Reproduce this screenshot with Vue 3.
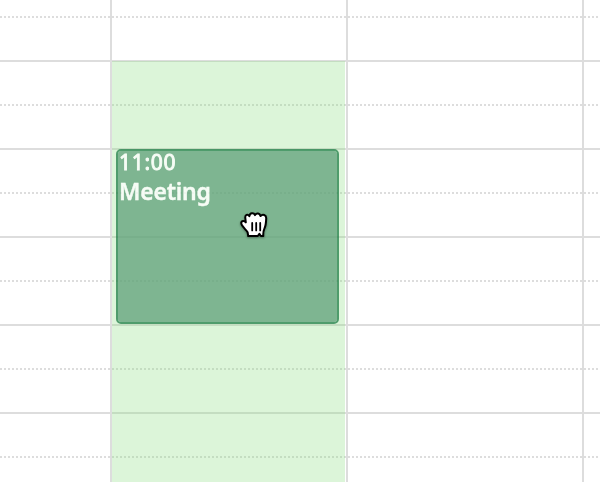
<script setup>
const rows = Array.from({ length: 11 }, (_, i) => ({ id: i, half: i % 2 === 0 }))
const event = { time: '11:00', title: 'Meeting' }
</script>

<template>
  <main class="calendar">
    <div class="slots">
      <div v-for="row in rows" :key="row.id" class="slot" :class="{ half: row.half }"></div>
    </div>
    <div class="columns">
      <div class="axis"></div>
      <div class="day">
        <div class="highlight"></div>
      </div>
      <div class="day"></div>
      <div class="day"></div>
    </div>
    <article class="event">
      <div class="time">{{ event.time }}</div>
      <div class="title">{{ event.title }}</div>
    </article>
    <svg class="cursor" viewBox="0 0 32 32" width="32" height="32" aria-hidden="true">
      <path class="hand" d="M9.6 24.2 C8.4 22 6 20.6 4.2 17.6 C2.4 14.8 3.4 12.6 5.6 13 C6.5 13.1 7.2 13.8 7.8 14.4 L7.3 10 C6.9 6.7 9.6 5.6 11.4 8.1 C12 4.7 15.7 4.4 17 7.1 C18.6 4.4 21.8 5.1 22.5 8 C24.6 5.8 28.4 6.8 28.2 10.4 C28.1 14.3 28 17.5 26.4 20.6 C25.1 23.4 25.1 25 25.3 28 L22.8 28 L21.4 25.8 L19.8 28 L10.2 28 Z" />
      <path class="fold" d="M14.2 15V22.4M18.2 15V22.4M22.2 15V22.4" />
    </svg>
  </main>
</template>

<style>
body {
  margin: 0;
  background: #fff;
}
</style>

<style scoped>
.calendar {
  position: relative;
  width: 600px;
  height: 482px;
  overflow: hidden;
  background: #fff;
  font-family: "Noto Sans", sans-serif;
}
.slots {
  padding-top: 16px;
}
.slot {
  height: 44px;
  box-sizing: border-box;
  border-top: 2px solid #ddd;
}
.slot.half {
  border-top: 0;
  background: repeating-linear-gradient(90deg, #ddd 0 2px, transparent 2px 4px) top / 100% 2px no-repeat;
}
.columns {
  position: absolute;
  inset: 0;
  display: grid;
  grid-template-columns: 110px 236px 236px 236px;
}
.day {
  border-left: 2px solid #ddd;
  padding: 61px 1px 0 0;
  display: flex;
}
.highlight {
  flex: 1;
  background: rgba(138, 222, 128, 0.3);
}
.event {
  position: absolute;
  left: 116px;
  top: 149px;
  width: 223px;
  height: 175px;
  box-sizing: border-box;
  padding: 0 1px;
  border: 2px solid #207f48;
  border-radius: 5px;
  background: #5fa079;
  background-clip: padding-box;
  color: #fff;
  opacity: 0.75;
  white-space: nowrap;
}
.time {
  font-size: 21px;
  line-height: 22px;
  letter-spacing: 0.7px;
  -webkit-text-stroke: 0.9px #fff;
}
.title {
  margin-top: 4px;
  font-size: 23px;
  font-weight: 600;
  line-height: 28px;
  letter-spacing: -0.2px;
  -webkit-text-stroke: 0.4px #fff;
}
.cursor {
  position: absolute;
  left: 238px;
  top: 208px;
  filter: drop-shadow(0 1px 1px rgba(0, 0, 0, 0.35));
}
.hand {
  fill: #fff;
  stroke: #000;
  stroke-width: 2;
  stroke-linejoin: round;
}
.fold {
  fill: none;
  stroke: #000;
  stroke-width: 1.8;
  stroke-linecap: round;
}
</style>
